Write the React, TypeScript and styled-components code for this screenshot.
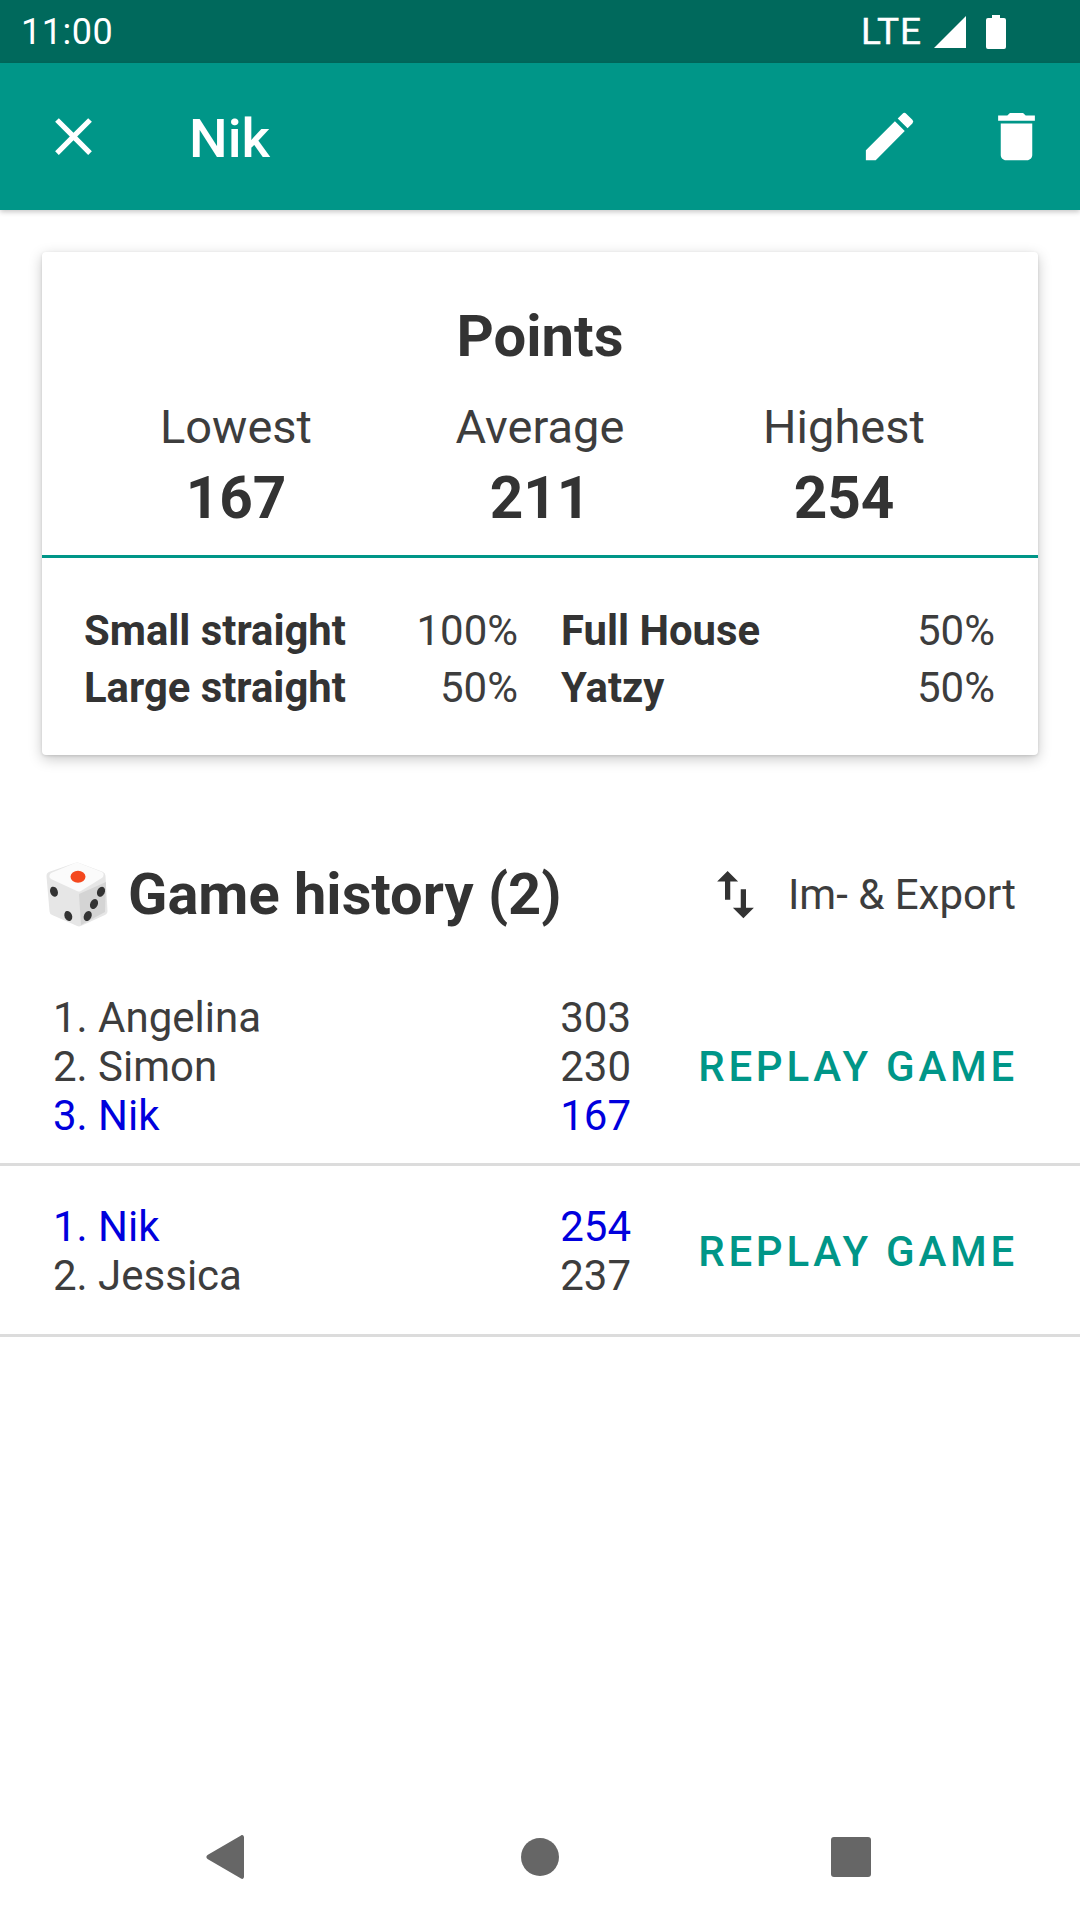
import styled, { createGlobalStyle } from 'styled-components'

const GlobalStyle = createGlobalStyle`
  html, body {
    margin: 0;
    padding: 0;
    background: #ffffff;
  }
  body {
    font-family: Roboto, "Liberation Sans", sans-serif;
    color: #333333;
  }
`

type PlayerRow = {
  rank: string
  score: number
  me?: boolean
}

type Game = {
  players: PlayerRow[]
}

const games: Game[] = [
  {
    players: [
      { rank: '1. Angelina', score: 303 },
      { rank: '2. Simon', score: 230 },
      { rank: '3. Nik', score: 167, me: true },
    ],
  },
  {
    players: [
      { rank: '1. Nik', score: 254, me: true },
      { rank: '2. Jessica', score: 237 },
    ],
  },
]

const App: React.FC = () => {
  return (
    <Screen>
      <GlobalStyle />
      <StatusBar>
        <Clock>11:00</Clock>
        <StatusRight>
          <Lte>LTE</Lte>
          <svg width="34" height="34" viewBox="0 0 34 34">
            <path d="M33 1v32H1z" fill="#fff" />
          </svg>
          <BatteryIcon width="20" height="34" viewBox="0 0 20 34">
            <path
              d="M6 0h8v3h4a2 2 0 0 1 2 2v27a2 2 0 0 1-2 2H2a2 2 0 0 1-2-2V5a2 2 0 0 1 2-2h4z"
              fill="#fff"
            />
          </BatteryIcon>
        </StatusRight>
      </StatusBar>
      <Header>
        <CloseIcon width="63" height="63" viewBox="0 0 24 24">
          <path
            fill="#fff"
            d="M19 6.41 17.59 5 12 10.59 6.41 5 5 6.41 10.59 12 5 17.59 6.41 19 12 13.41 17.59 19 19 17.59 13.41 12z"
          />
        </CloseIcon>
        <HeaderTitle>Nik</HeaderTitle>
        <HeaderActions>
          <svg width="63" height="63" viewBox="0 0 24 24">
            <path
              fill="#fff"
              d="M3 17.25V21h3.75L17.81 9.94l-3.75-3.75L3 17.25zM20.71 7.04a1 1 0 0 0 0-1.41l-2.34-2.34a1 1 0 0 0-1.41 0l-1.83 1.83 3.75 3.75 1.83-1.83z"
            />
          </svg>
          <svg width="63" height="63" viewBox="0 0 24 24">
            <path
              fill="#fff"
              d="M6 19c0 1.1.9 2 2 2h8c1.1 0 2-.9 2-2V7H6v12zM19 4h-3.5l-1-1h-5l-1 1H5v2h14V4z"
            />
          </svg>
        </HeaderActions>
      </Header>

      <Card>
        <CardTop>
          <CardTitle>Points</CardTitle>
          <PointsGrid>
            <PointsColumn>
              <PointsLabel>Lowest</PointsLabel>
              <PointsValue>167</PointsValue>
            </PointsColumn>
            <PointsColumn>
              <PointsLabel>Average</PointsLabel>
              <PointsValue>211</PointsValue>
            </PointsColumn>
            <PointsColumn>
              <PointsLabel>Highest</PointsLabel>
              <PointsValue>254</PointsValue>
            </PointsColumn>
          </PointsGrid>
        </CardTop>
        <CardBottom>
          <StatLine>
            <StatName>Small straight</StatName>
            <StatPercent>100%</StatPercent>
          </StatLine>
          <StatLine>
            <StatName>Full House</StatName>
            <StatPercent>50%</StatPercent>
          </StatLine>
          <StatLine>
            <StatName>Large straight</StatName>
            <StatPercent>50%</StatPercent>
          </StatLine>
          <StatLine>
            <StatName>Yatzy</StatName>
            <StatPercent>50%</StatPercent>
          </StatLine>
        </CardBottom>
      </Card>

      <HistoryHeader>
        <HistoryTitle>
          <svg width="66" height="66" viewBox="0 0 66 66">
            <path
              d="M32 6 56 15 58 50 34 61 9 50 6 15z"
              fill="#e6e6e6"
              stroke="#e6e6e6"
              strokeWidth="9"
              strokeLinejoin="round"
            />
            <path d="M34 33 61 21 60 51 36 64z" fill="#d4d4d4" />
            <path
              d="M32 5 55 14 34 27 8 15z"
              fill="#fbfbfb"
              stroke="#fbfbfb"
              strokeWidth="7"
              strokeLinejoin="round"
            />
            <ellipse cx="33" cy="15.700" rx="7.500" ry="6" fill="#f4481e" />
            <ellipse cx="9" cy="30.700" rx="3.800" ry="5.200" fill="#333" transform="rotate(-20 9 30.700)" />
            <ellipse cx="23.300" cy="55" rx="3.800" ry="5.200" fill="#333" transform="rotate(-20 23.300 55)" />
            <ellipse cx="56" cy="30.700" rx="3.800" ry="5.200" fill="#333" transform="rotate(25 56 30.700)" />
            <ellipse cx="49" cy="43" rx="3.800" ry="5.200" fill="#333" transform="rotate(25 49 43)" />
            <ellipse cx="42.700" cy="55" rx="3.800" ry="5.200" fill="#333" transform="rotate(25 42.700 55)" />
          </svg>
          <HistoryText>Game history (2)</HistoryText>
        </HistoryTitle>
        <ExportButton>
          <svg width="63" height="63" viewBox="0 0 24 24">
            <path
              fill="#333"
              d="M9 3 5 7h3v7h2V7h3zm7 14v-7h-2v7h-3l4 4 4-4z"
            />
          </svg>
          <ExportLabel>Im- &amp; Export</ExportLabel>
        </ExportButton>
      </HistoryHeader>

      <GameList>
        {games.map((game) => (
          <GameRow key={game.players[0].rank}>
            <PlayerTable>
              {game.players.map((player) => (
                <PlayerLine key={player.rank} $me={player.me}>
                  <span>{player.rank}</span>
                  <span>{player.score}</span>
                </PlayerLine>
              ))}
            </PlayerTable>
            <ReplayButton>REPLAY GAME</ReplayButton>
          </GameRow>
        ))}
      </GameList>

      <NavBar>
        <BackIcon width="39" height="46" viewBox="0 0 39 46">
          <path
            d="M35 1.500c1.500-1 3 0 3 2v39c0 2-1.500 3-3 2L1.500 25c-1.500-1-1.500-3 0-4z"
            fill="#666"
          />
        </BackIcon>
        <HomeDot />
        <RecentSquare />
      </NavBar>
    </Screen>
  )
}

const Screen = styled.div`
  width: 1080px;
  height: 1920px;
  display: flex;
  flex-direction: column;
  overflow: hidden;
  background: #ffffff;
`

const StatusBar = styled.div`
  height: 63px;
  flex-shrink: 0;
  display: flex;
  align-items: center;
  justify-content: space-between;
  padding: 0 74px 0 21px;
  background: #00695c;
  color: #ffffff;
`

const Clock = styled.span`
  font-size: 36px;
  letter-spacing: 0.5px;
`

const StatusRight = styled.div`
  display: flex;
  align-items: center;
  gap: 11px;
`

const Lte = styled.span`
  font-size: 37px;
  letter-spacing: 1px;
  -webkit-text-stroke: 0.4px #ffffff;
`

const BatteryIcon = styled.svg`
  margin-left: 8px;
`

const Header = styled.div`
  height: 147px;
  flex-shrink: 0;
  display: flex;
  align-items: center;
  padding: 0 32px 0 42px;
  background: #009688;
  box-shadow: 0 2px 5px rgba(0, 0, 0, 0.22);
`

const CloseIcon = styled.svg`
  flex-shrink: 0;
`

const HeaderTitle = styled.div`
  margin: 2px 0 0 84px;
  font-size: 54.5px;
  font-weight: 500;
  color: #ffffff;
`

const HeaderActions = styled.div`
  margin-left: auto;
  display: flex;
  gap: 64px;
`

const Card = styled.div`
  margin: 42px 42px 0;
  height: 503px;
  flex-shrink: 0;
  display: flex;
  flex-direction: column;
  background: #ffffff;
  border-radius: 4px;
  box-shadow: 0 4px 14px rgba(0, 0, 0, 0.22), 0 1px 3px rgba(0, 0, 0, 0.12);
`

const CardTop = styled.div`
  height: 306px;
  box-sizing: border-box;
  padding-top: 51px;
  border-bottom: 3px solid #009688;
`

const CardTitle = styled.div`
  text-align: center;
  font-size: 58px;
  line-height: 66px;
  font-weight: 700;
`

const PointsGrid = styled.div`
  display: grid;
  grid-template-columns: repeat(3, 304px);
  justify-content: center;
  margin-top: 28px;
`

const PointsColumn = styled.div`
  display: flex;
  flex-direction: column;
  align-items: center;
`

const PointsLabel = styled.div`
  font-size: 47px;
  line-height: 60px;
  color: #3d3d3d;
`

const PointsValue = styled.div`
  font-size: 58.5px;
  line-height: 82px;
  font-weight: 700;
`

const CardBottom = styled.div`
  padding: 44px 42px 0;
  display: grid;
  grid-template-columns: 434px 434px;
  column-gap: 43px;
  grid-auto-rows: 57px;
  align-items: center;
`

const StatLine = styled.div`
  display: flex;
  justify-content: space-between;
  align-items: center;
`

const StatName = styled.div`
  font-size: 41.8px;
  font-weight: 700;
  white-space: nowrap;
`

const StatPercent = styled.div`
  font-size: 42px;
  color: #3d3d3d;
`

const HistoryHeader = styled.div`
  margin-top: 101px;
  height: 76px;
  flex-shrink: 0;
  display: flex;
  align-items: center;
  justify-content: space-between;
  padding: 0 64px 0 45px;
`

const HistoryTitle = styled.div`
  display: flex;
  align-items: center;
  gap: 17px;
`

const HistoryText = styled.div`
  font-size: 57.8px;
  font-weight: 700;
`

const ExportButton = styled.div`
  display: flex;
  align-items: center;
  gap: 21px;
`

const ExportLabel = styled.div`
  font-size: 42px;
  color: #3d3d3d;
`

const GameList = styled.div`
  margin-top: 36px;
`

const GameRow = styled.div`
  display: flex;
  align-items: center;
  box-sizing: border-box;
  min-height: 171px;
  padding: 25px 62px 23px 53px;
  border-bottom: 3px solid #dcdcdc;
`

const PlayerTable = styled.div`
  width: 578px;
`

const PlayerLine = styled.div<{ $me?: boolean }>`
  display: flex;
  justify-content: space-between;
  font-size: 42px;
  line-height: 49px;
  color: ${(p) => (p.$me ? '#0000dd' : '#3d3d3d')};
`

const ReplayButton = styled.div`
  margin-left: auto;
  font-size: 42px;
  font-weight: 500;
  letter-spacing: 3.750px;
  color: #009688;
  white-space: nowrap;
`

const NavBar = styled.div`
  margin-top: auto;
  height: 126px;
  flex-shrink: 0;
  display: flex;
  align-items: center;
  justify-content: center;
  gap: 272px;
  padding-right: 3px;
`

const BackIcon = styled.svg`
  margin-right: 4px;
`

const HomeDot = styled.div`
  width: 38px;
  height: 38px;
  border-radius: 50%;
  background: #666666;
`

const RecentSquare = styled.div`
  width: 40px;
  height: 40px;
  border-radius: 3px;
  background: #666666;
`

export default App
